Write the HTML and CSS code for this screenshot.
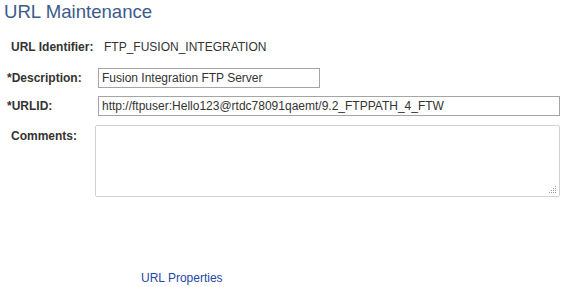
FILE: index.html
```html
<!DOCTYPE html>
<html>
<head>
<meta charset="utf-8">
<title>URL Maintenance</title>
<link rel="stylesheet" href="styles.css">
</head>
<body>
<div class="page">
  <h1 class="title">URL Maintenance</h1>
  <div class="form">
    <div class="row row-id">
      <div class="label">URL Identifier:</div>
      <div class="field"><span class="value">FTP_FUSION_INTEGRATION</span></div>
    </div>
    <div class="row row-desc">
      <label class="label req">*Description:</label>
      <div class="field"><input class="input input-desc" type="text" value="Fusion Integration FTP Server"></div>
    </div>
    <div class="row row-url">
      <label class="label req">*URLID:</label>
      <div class="field"><input class="input input-url" type="text" value="http://ftpuser:Hello123@rtdc78091qaemt/9.2_FTPPATH_4_FTW"></div>
    </div>
    <div class="row row-comments">
      <label class="label label-top">Comments:</label>
      <div class="field">
        <div class="ta-wrap">
          <textarea class="textarea"></textarea>
          <svg class="grip" width="7" height="7" viewBox="0 0 7 7">
            <rect x="6" y="0" width="1" height="1"/>
            <rect x="4" y="2" width="1" height="1"/>
            <rect x="6" y="2" width="1" height="1"/>
            <rect x="2" y="4" width="1" height="1"/>
            <rect x="4" y="4" width="1" height="1"/>
            <rect x="6" y="4" width="1" height="1"/>
            <rect x="0" y="6" width="1" height="1"/>
            <rect x="2" y="6" width="1" height="1"/>
            <rect x="4" y="6" width="1" height="1"/>
            <rect x="6" y="6" width="1" height="1"/>
          </svg>
        </div>
      </div>
    </div>
  </div>
  <div class="links">
    <a class="link" href="#">URL Properties</a>
  </div>
</div>
</body>
</html>
```

FILE: styles.css
```css
html, body {
  margin: 0;
  padding: 0;
  background: #ffffff;
}

body {
  font-family: "Liberation Sans", Arial, sans-serif;
  font-size: 12px;
  color: #333333;
}

.page {
  width: 563px;
}

.title {
  margin: 0;
  padding: 1px 0 0 4px;
  height: 27px;
  font-size: 18.6px;
  line-height: 22px;
  font-weight: normal;
  color: #3d5b8b;
}

.form {
  display: flex;
  flex-direction: column;
  padding-top: 8px;
}

.row {
  display: flex;
  align-items: center;
}

.row-id {
  height: 22px;
}

.row-desc {
  margin-top: 10px;
}

.row-url {
  margin-top: 8px;
}

.row-comments {
  margin-top: 9px;
  align-items: flex-start;
}

.label {
  width: 87px;
  padding-left: 11px;
  flex: none;
  font-weight: bold;
  color: #333333;
  line-height: 14px;
}

.label.req {
  width: 91px;
  padding-left: 7px;
}

.label-top {
  padding-top: 4px;
}

.field {
  flex: 1;
  display: flex;
}

.value {
  padding-left: 6px;
  color: #333333;
}

.input {
  box-sizing: border-box;
  height: 20px;
  margin: 0;
  padding: 0 3px;
  border: 1px solid #a5a5a5;
  border-radius: 0;
  font-family: "Liberation Sans", Arial, sans-serif;
  font-size: 12px;
  color: #333333;
  background: #ffffff;
  outline: none;
}

.input-desc {
  width: 222px;
}

.input-url {
  width: 462px;
}

.ta-wrap {
  position: relative;
  margin-left: -3px;
  width: 465px;
  height: 72px;
}

.textarea {
  box-sizing: border-box;
  display: block;
  width: 465px;
  height: 72px;
  margin: 0;
  padding: 2px 3px;
  border: 1px solid #cfd3d8;
  border-radius: 2px;
  resize: none;
  font-family: "Liberation Sans", Arial, sans-serif;
  font-size: 12px;
  color: #333333;
  background: #ffffff;
  outline: none;
}

.grip {
  position: absolute;
  right: 4px;
  bottom: 4px;
  fill: #9a9a9a;
}

.links {
  padding: 74px 0 0 141px;
}

.link {
  color: #1f46ab;
  text-decoration: none;
  font-size: 12px;
  line-height: 14px;
}
```
